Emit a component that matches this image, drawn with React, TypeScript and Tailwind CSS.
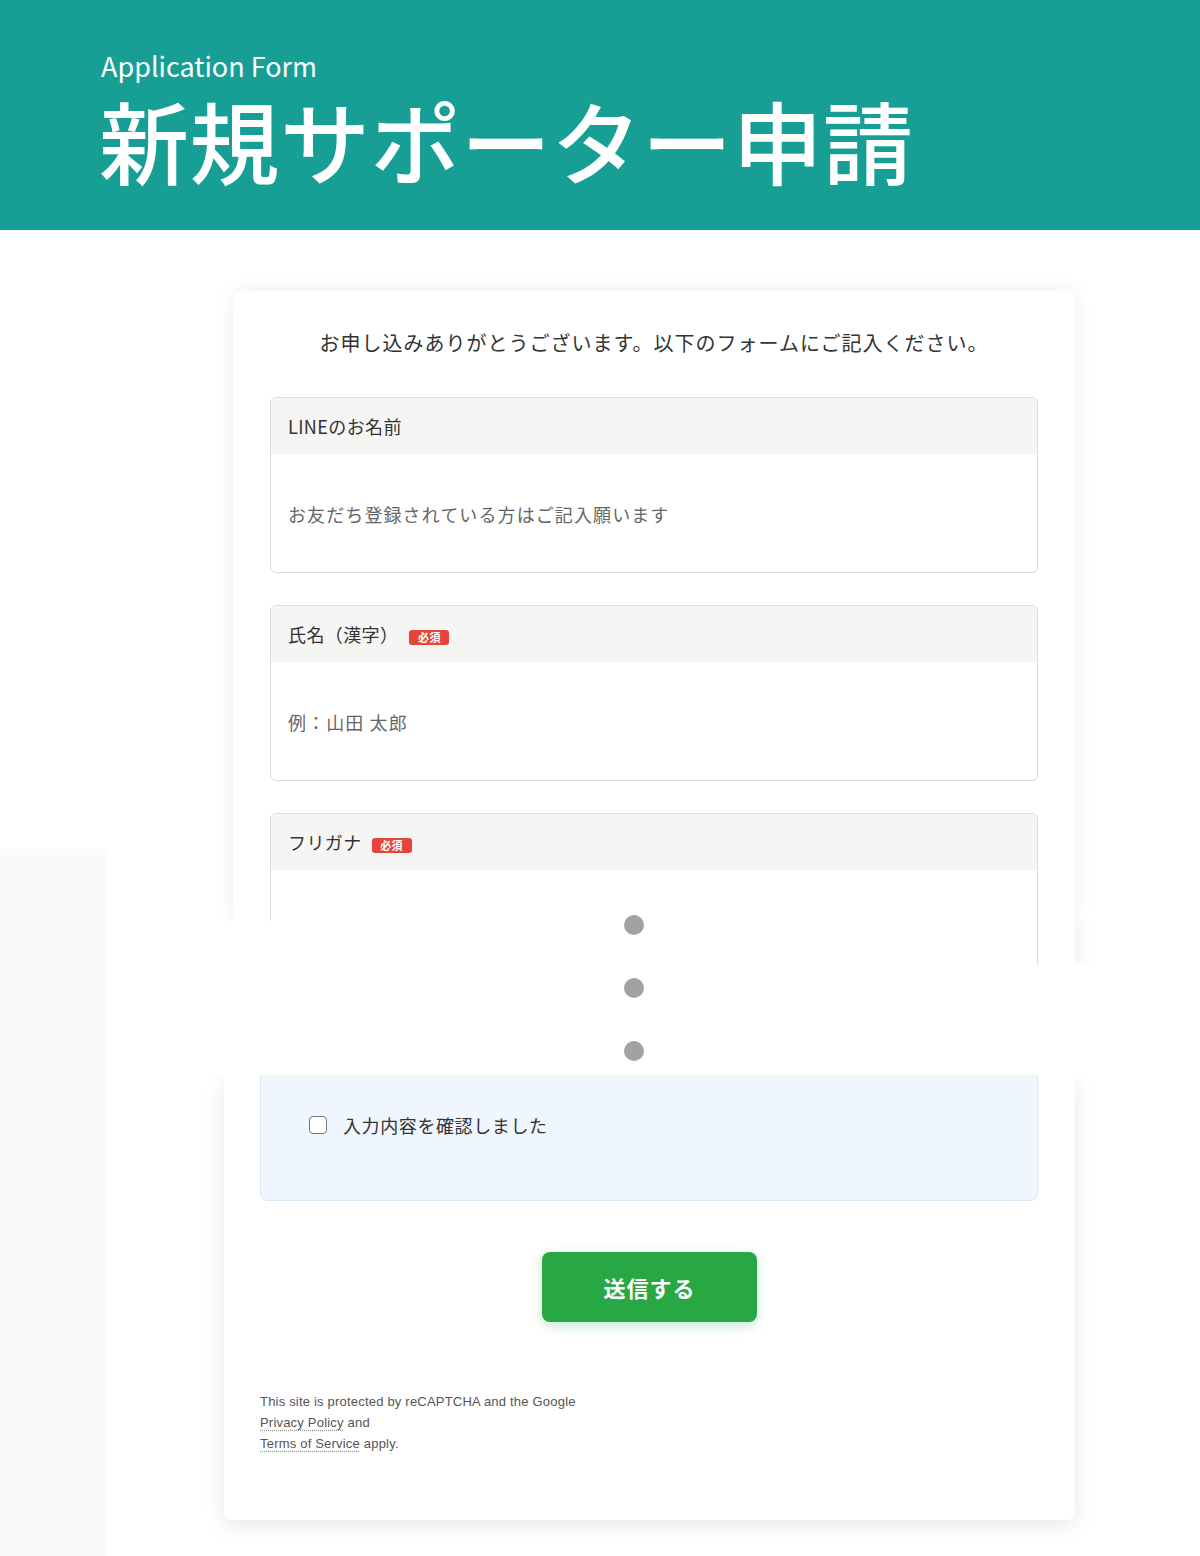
import React from "react";

const jp = "font-['Noto_Sans_CJK_JP','Noto_Sans',sans-serif]";

const Badge = () => (
  <span className="inline-flex h-[15px] w-[40px] items-center justify-center rounded-[3px] bg-[#e5443a] text-[11px] font-bold leading-none text-white">
    必須
  </span>
);

const Field = ({
  label,
  required,
  placeholder,
  badgeGap = "ml-[11px]",
}: {
  label: string;
  required?: boolean;
  placeholder: string;
  badgeGap?: string;
}) => (
  <div className="overflow-hidden rounded-md border border-[#dcdcdc]">
    <div className="flex h-[56px] items-center bg-[#f5f5f4] px-[17px] text-[18px] tracking-[0.4px] text-[#333]">
      <span>{label}</span>
      {required && (
        <span className={badgeGap}>
          <Badge />
        </span>
      )}
    </div>
    <div className="flex h-[118px] items-center px-[17px] pt-[2px] text-[18px] tracking-[1.1px] text-[#666]">
      {placeholder}
    </div>
  </div>
);

const App = () => {
  return (
    <div className={`${jp} min-h-[1556px] w-[1200px] bg-white`}>
      {/* header */}
      <header className="flex h-[230px] flex-col bg-[#179f96] pl-[101px] pt-[46px] text-white">
        <p className="text-[27px] leading-[40px]">Application Form</p>
        <h1 className="-ml-[2px] mt-[8px] text-[90px] font-medium leading-[90px] tracking-[0.5px]">
          新規サポーター申請
        </h1>
      </header>

      <div className="flex">
        {/* left strip */}
        <div className="flex w-[107px] flex-col">
          <div className="h-[619px] bg-white" />
          <div className="flex-1 bg-[#fafafa]" />
        </div>

        <div className="flex w-[1093px] flex-col">
          {/* upper part of the card, cut off */}
          <div className="ml-[106px] w-[882px] overflow-hidden px-[20px] pt-[61px]">
            <div className="flex h-[630px] flex-col overflow-hidden rounded-t-lg bg-white px-[37px] pt-[37px] shadow-[0_0_20px_rgba(0,0,0,0.07)]">
              <p className="text-center text-[20px] leading-[30px] tracking-[1px] text-[#333]">
                お申し込みありがとうございます。以下のフォームにご記入ください。
              </p>
              <div className="mt-[39px] flex flex-col gap-[32px]">
                <Field label="LINEのお名前" placeholder="お友だち登録されている方はご記入願います" />
                <Field label="氏名（漢字）" required placeholder="例：山田 太郎" />
                <Field label="フリガナ" required placeholder="" badgeGap="ml-[10px]" />
              </div>
            </div>
          </div>

          {/* cut band */}
          <div className="flex h-[154px]">
            <div className="ml-[126px] flex w-[421px]">
              <div className="ml-[391px] -mt-[6px] flex flex-col gap-[43px]">
                <span className="h-[20px] w-[20px] rounded-full bg-[#a2a2a2]" />
                <span className="h-[20px] w-[20px] rounded-full bg-[#a2a2a2]" />
                <span className="h-[20px] w-[20px] rounded-full bg-[#a2a2a2]" />
              </div>
            </div>
            <div className="h-[44px] w-[441px] overflow-hidden pr-[20px]">
              <div className="h-full bg-white pr-[37px] shadow-[6px_0_16px_rgba(0,0,0,0.06)]">
                <div className="h-full border-r border-[#dcdcdc]" />
              </div>
            </div>
          </div>

          {/* lower part of the card */}
          <div className="ml-[97px] w-[891px] overflow-hidden px-[20px] pb-[36px]">
            <div className="flex h-[445px] flex-col rounded-b-lg bg-white px-[36px] shadow-[0_6px_22px_rgba(0,0,0,0.09)]">
              <div className="mr-[1px] flex h-[126px] items-start rounded-b-lg border border-t-0 border-[#d8e8f6] bg-[#f0f6fd] pl-[48px] pt-[40px]">
                <label className="flex items-center gap-[16px] text-[18px] leading-[20px] tracking-[0.6px] text-[#333]">
                  <span className="h-[18px] w-[18px] rounded-[4px] border-[1.5px] border-[#767676] bg-white" />
                  入力内容を確認しました
                </label>
              </div>

              <div className="mt-[51px] flex justify-center">
                <button className="h-[70px] w-[215px] rounded-lg bg-[#28a745] text-[22px] font-bold tracking-[1px] text-white shadow-[0_4px_12px_rgba(40,167,69,0.25)]">
                  送信する
                </button>
              </div>

              <div className="mt-[69px] font-['Liberation_Sans',sans-serif] text-[13px] leading-[21px] tracking-[0.2px] text-[#555]">
                <p>This site is protected by reCAPTCHA and the Google</p>
                <p>
                  <a className="underline decoration-[#999] decoration-dotted underline-offset-[3px]">
                    Privacy Policy
                  </a>{" "}
                  and
                </p>
                <p>
                  <a className="underline decoration-[#999] decoration-dotted underline-offset-[3px]">
                    Terms of Service
                  </a>{" "}
                  apply.
                </p>
              </div>
            </div>
          </div>
        </div>
      </div>
    </div>
  );
};

export default App;
